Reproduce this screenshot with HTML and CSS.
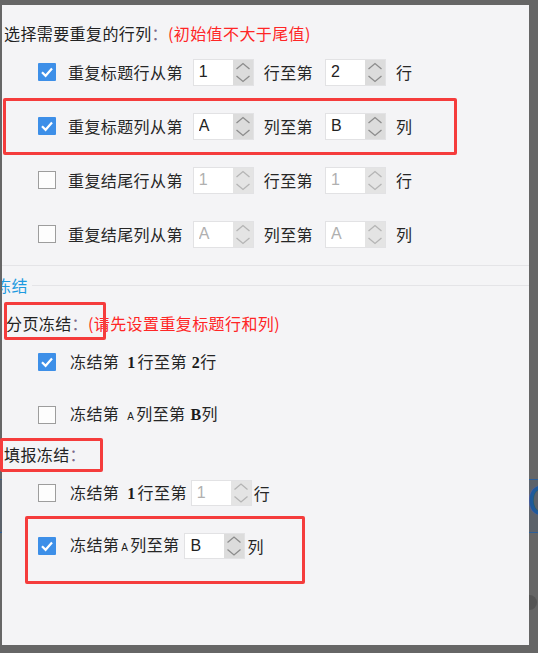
FILE: index.html
```html
<!DOCTYPE html>
<html lang="zh-CN">
<head>
    <meta charset="UTF-8">
    <meta name="viewport" content="width=device-width, initial-scale=1.0">
    <title>重复与冻结</title>
    <link rel="stylesheet" href="styles.css">
</head>
<body>
    <div class="backdrop"><span class="backdrop-c">C</span></div>
    <div class="dot"></div>

    <div class="panel">
        <div class="title">选择需要重复的行列<span class="colon">：</span><span class="hint">(初始值不大于尾值)</span></div>

        <div class="row">
            <span class="check on"><svg width="18" height="18" viewBox="0 0 18 18"><path d="M4 9.2 L7.6 12.8 L14 5.6" fill="none" stroke="#fff" stroke-width="2.2"/></svg></span>
            <span class="label">重复标题行从第</span>
            <div class="spin"><input type="text" value="1"><span class="spin-btn"><svg width="20" height="25" viewBox="0 0 20 25"><path d="M3.5 9 L10 3.5 L16.5 9 M3.5 16 L10 21.5 L16.5 16" fill="none" stroke="#8c8c8c" stroke-width="1.3"/></svg></span></div>
            <span class="mid">行至第</span>
            <div class="spin"><input type="text" value="2"><span class="spin-btn"><svg width="20" height="25" viewBox="0 0 20 25"><path d="M3.5 9 L10 3.5 L16.5 9 M3.5 16 L10 21.5 L16.5 16" fill="none" stroke="#8c8c8c" stroke-width="1.3"/></svg></span></div>
            <span class="end">行</span>
        </div>

        <div class="row">
            <span class="check on"><svg width="18" height="18" viewBox="0 0 18 18"><path d="M4 9.2 L7.6 12.8 L14 5.6" fill="none" stroke="#fff" stroke-width="2.2"/></svg></span>
            <span class="label">重复标题列从第</span>
            <div class="spin"><input type="text" value="A"><span class="spin-btn"><svg width="20" height="25" viewBox="0 0 20 25"><path d="M3.5 9 L10 3.5 L16.5 9 M3.5 16 L10 21.5 L16.5 16" fill="none" stroke="#8c8c8c" stroke-width="1.3"/></svg></span></div>
            <span class="mid">列至第</span>
            <div class="spin"><input type="text" value="B"><span class="spin-btn"><svg width="20" height="25" viewBox="0 0 20 25"><path d="M3.5 9 L10 3.5 L16.5 9 M3.5 16 L10 21.5 L16.5 16" fill="none" stroke="#8c8c8c" stroke-width="1.3"/></svg></span></div>
            <span class="end">列</span>
            <span class="mark mark-a"></span>
        </div>

        <div class="row">
            <span class="check off"></span>
            <span class="label">重复结尾行从第</span>
            <div class="spin off"><input type="text" value="1" disabled><span class="spin-btn"><svg width="20" height="25" viewBox="0 0 20 25"><path d="M3.5 9 L10 3.5 L16.5 9 M3.5 16 L10 21.5 L16.5 16" fill="none" stroke="#b4b4b4" stroke-width="1.3"/></svg></span></div>
            <span class="mid">行至第</span>
            <div class="spin off"><input type="text" value="1" disabled><span class="spin-btn"><svg width="20" height="25" viewBox="0 0 20 25"><path d="M3.5 9 L10 3.5 L16.5 9 M3.5 16 L10 21.5 L16.5 16" fill="none" stroke="#b4b4b4" stroke-width="1.3"/></svg></span></div>
            <span class="end">行</span>
        </div>

        <div class="row">
            <span class="check off"></span>
            <span class="label">重复结尾列从第</span>
            <div class="spin off"><input type="text" value="A" disabled><span class="spin-btn"><svg width="20" height="25" viewBox="0 0 20 25"><path d="M3.5 9 L10 3.5 L16.5 9 M3.5 16 L10 21.5 L16.5 16" fill="none" stroke="#b4b4b4" stroke-width="1.3"/></svg></span></div>
            <span class="mid">列至第</span>
            <div class="spin off"><input type="text" value="A" disabled><span class="spin-btn"><svg width="20" height="25" viewBox="0 0 20 25"><path d="M3.5 9 L10 3.5 L16.5 9 M3.5 16 L10 21.5 L16.5 16" fill="none" stroke="#b4b4b4" stroke-width="1.3"/></svg></span></div>
            <span class="end">列</span>
        </div>

        <div class="divider"></div>
        <div class="legend"><span>冻结</span></div>

        <!-- 分页冻结 -->
        <div class="group">分页冻结<span class="colon">：</span><span class="hint">(请先设置重复标题行和列)</span><span class="mark mark-b"></span></div>

        <div class="frow">
            <span class="check on"><svg width="18" height="18" viewBox="0 0 18 18"><path d="M4 9.2 L7.6 12.8 L14 5.6" fill="none" stroke="#fff" stroke-width="2.2"/></svg></span>
            <span>冻结第<span class="num gap">1</span>行至第<span class="num gap2">2</span>行</span>
        </div>

        <div class="frow">
            <span class="check off"></span>
            <span>冻结第<span class="small gap">A</span>列至第<span class="num gap2">B</span>列</span>
        </div>

        <!-- 填报冻结 -->
        <div class="group second">填报冻结<span class="colon">：</span><span class="mark mark-c"></span></div>

        <div class="frow">
            <span class="check off"></span>
            <span>冻结第<span class="num gap">1</span>行至第</span>
            <div class="spin sm off"><input type="text" value="1" disabled><span class="spin-btn"><svg width="20" height="24" viewBox="0 0 20 24"><path d="M3.5 8.5 L10 3 L16.5 8.5 M3.5 15.5 L10 21 L16.5 15.5" fill="none" stroke="#b4b4b4" stroke-width="1.3"/></svg></span></div>
            <span class="tail">行</span>
        </div>

        <div class="frow">
            <span class="check on"><svg width="18" height="18" viewBox="0 0 18 18"><path d="M4 9.2 L7.6 12.8 L14 5.6" fill="none" stroke="#fff" stroke-width="2.2"/></svg></span>
            <span>冻结第<span class="small tiny">A</span>列至第</span>
            <div class="spin sm wide"><input type="text" value="B"><span class="spin-btn"><svg width="20" height="24" viewBox="0 0 20 24"><path d="M3.5 8.5 L10 3 L16.5 8.5 M3.5 15.5 L10 21 L16.5 15.5" fill="none" stroke="#8c8c8c" stroke-width="1.3"/></svg></span></div>
            <span class="tail">列</span>
            <span class="mark mark-d"></span>
        </div>
    </div>
</body>
</html>
```

FILE: styles.css
```css
body {
    margin: 0;
    height: 653px;
    overflow: hidden;
    position: relative;
    background-color: #666;
    font-family: "Noto Sans CJK SC", "Microsoft YaHei", sans-serif;
}

/* 面板后面露出的窗口 */
.backdrop {
    position: absolute;
    left: 0;
    right: 0;
    top: 479px;
    height: 52px;
    background: #5c626a;
    border-top: 1px solid #2d5f98;
    border-bottom: 1px solid #2d5f98;
}

.backdrop-c {
    position: absolute;
    left: 527px;
    top: -4px;
    color: #1f5a9a;
    font: 44px "Liberation Sans", sans-serif;
}

.dot {
    position: absolute;
    left: 522px;
    top: 595px;
    width: 15px;
    height: 15px;
    border-radius: 50%;
    background: #555;
}

.panel {
    position: relative;
    margin: 5px 0 0 2px;
    width: 527px;
    height: 640px;
    box-sizing: border-box;
    padding-top: 16px;
    background: #f4f4f6;
    letter-spacing: 0.4px;
}

.title {
    height: 24px;
    line-height: 24px;
    padding-left: 2px;
    font-size: 16px;
    color: #222;
    white-space: nowrap;
}

.colon {
    color: #7b6a8c;
}

.hint {
    color: #ff2626;
}

.row {
    position: relative;
    height: 54px;
    display: flex;
    align-items: center;
    padding-left: 36px;
    font-size: 16px;
    line-height: 24px;
    color: #262626;
}

.check {
    flex: none;
    width: 18px;
    height: 18px;
    box-sizing: border-box;
    margin-right: 12px;
}

.check svg {
    display: block;
}

.check.on {
    background: #3d8fe8;
    border-radius: 1px;
}

.check.off {
    background: #fdfdfd;
    border: 1px solid #9d9d9d;
}

.label {
    margin-right: 10px;
}

.mid {
    margin: 0 12px 0 10px;
}

.end {
    margin-left: 10px;
}

.spin {
    flex: none;
    display: flex;
    height: 27px;
    box-sizing: border-box;
    border: 1px solid #e2e2e4;
    background: #fff;
}

.spin input {
    width: 39px;
    border: 0;
    margin: 0;
    padding: 0 0 0 5px;
    box-sizing: border-box;
    font: 16px "Liberation Sans", Arial, sans-serif;
    color: #222;
    background: #fff;
    outline: none;
}

.spin.off input {
    color: #b0b0b0;
}

.spin-btn {
    width: 20px;
    background: #dcdcdc;
}

.spin.off .spin-btn {
    background: #e4e4e4;
}

.spin-btn svg {
    display: block;
}

.spin.sm {
    height: 26px;
    margin-left: 4px;
}

.spin.wide {
    margin-left: 5px;
}

.divider {
    margin-top: 4px;
    height: 1px;
    background: #e4e4e7;
}

.legend {
    margin-top: 9px;
    height: 20px;
    display: flex;
    align-items: center;
    overflow: hidden;
}

.legend span {
    margin-left: -7px;
    font-size: 16px;
    line-height: 20px;
    color: #1e9be0;
    white-space: nowrap;
}

.legend::after {
    content: "";
    flex: 1;
    height: 1px;
    margin-left: 4px;
    background: #e4e4e7;
}

.group {
    position: relative;
    margin-top: 16px;
    height: 24px;
    line-height: 24px;
    padding-left: 4px;
    font-size: 16px;
    color: #222;
    white-space: nowrap;
}

.group.second {
    margin-top: 1px;
    padding-left: 2px;
}

.frow {
    position: relative;
    height: 53px;
    display: flex;
    align-items: center;
    padding-left: 36px;
    font-size: 16px;
    line-height: 24px;
    color: #262626;
    white-space: nowrap;
}

.frow .check {
    margin-right: 14px;
}

.num {
    font-family: "Liberation Serif", serif;
    font-weight: bold;
    color: #1a1a1a;
}

.small {
    font-family: "Liberation Sans", sans-serif;
    font-size: 10px;
    color: #1a1a1a;
}

.gap {
    margin: 0 2px 0 8px;
}

.gap2 {
    margin-left: 5px;
}

.tiny {
    margin: 0 2px 0 2px;
}

.tail {
    margin-left: 2px;
}

/* 截图上的红框标注 */
.mark {
    position: absolute;
    box-sizing: border-box;
    border: 3px solid #f53c3c;
    border-radius: 2px;
}

.mark-a {
    left: 1px;
    top: -1px;
    width: 454px;
    height: 57px;
}

.mark-b {
    left: 2px;
    top: -9px;
    width: 102px;
    height: 38px;
}

.mark-c {
    left: -2px;
    top: -4px;
    width: 103px;
    height: 34px;
}

.mark-d {
    left: 23px;
    top: -3px;
    width: 280px;
    height: 68px;
}
```
